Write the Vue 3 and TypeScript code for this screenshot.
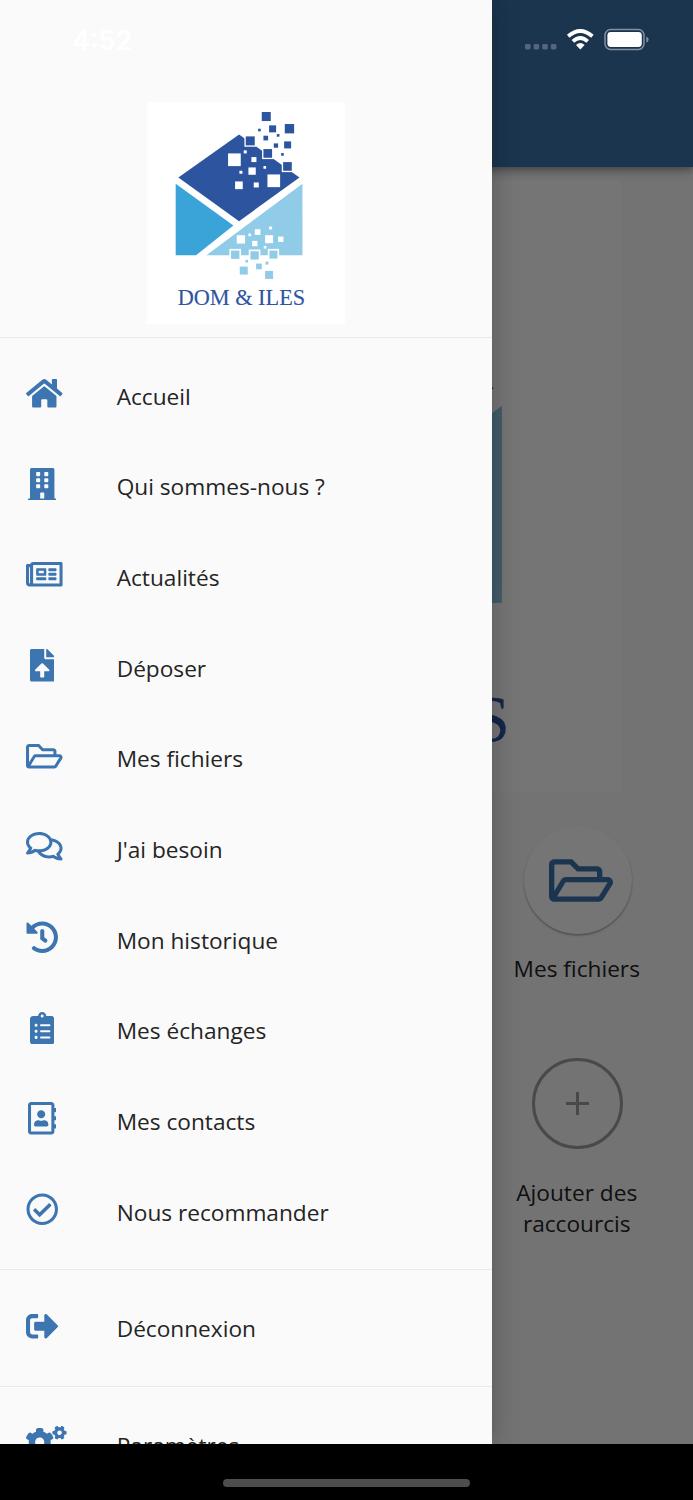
<script setup lang="ts">
interface Icon {
  w: number
  d: string
}
interface Entry {
  label: string
  icon: Icon
}

const folder: Icon = {
  w: 576,
  d: 'M527.9 224H480v-48c0-26.5-21.5-48-48-48H272l-64-64H48C21.5 64 0 85.5 0 112v288c0 26.5 21.5 48 48 48h400c16.5 0 31.9-8.5 40.7-22.6l79.9-128c20-31.9-3-73.4-40.7-73.4zM48 118c0-3.3 2.7-6 6-6h134.1l64 64H426c3.3 0 6 2.7 6 6v42H152c-16.8 0-32.4 8.8-41.1 23.2L48 351.4zm400 282H72l77.2-128H528z',
}

const groups: Entry[][] = [
  [
    {
      label: 'Accueil',
      icon: {
        w: 576,
        d: 'M280.37 148.26L96 300.11V464a16 16 0 0 0 16 16l112.06-.29a16 16 0 0 0 15.92-16V368a16 16 0 0 1 16-16h64a16 16 0 0 1 16 16v95.64a16 16 0 0 0 16 16.05L464 480a16 16 0 0 0 16-16V300L295.67 148.26a12.19 12.19 0 0 0-15.3 0zM571.6 251.47L488 182.56V44.05a12 12 0 0 0-12-12h-56a12 12 0 0 0-12 12v72.61L318.47 43a48 48 0 0 0-61 0L4.34 251.47a12 12 0 0 0-1.6 16.9l25.5 31A12 12 0 0 0 45.15 301l235.22-193.74a12.19 12.19 0 0 1 15.3 0L530.9 301a12 12 0 0 0 16.9-1.6l25.5-31a12 12 0 0 0-1.7-16.93z',
      },
    },
    {
      label: 'Qui sommes-nous ?',
      icon: {
        w: 448,
        d: 'M436 480h-20V24c0-13.255-10.745-24-24-24H56C42.745 0 32 10.745 32 24v456H12c-6.627 0-12 5.373-12 12v20h448v-20c0-6.627-5.373-12-12-12zM128 76c0-6.627 5.373-12 12-12h40c6.627 0 12 5.373 12 12v40c0 6.627-5.373 12-12 12h-40c-6.627 0-12-5.373-12-12V76zm0 96c0-6.627 5.373-12 12-12h40c6.627 0 12 5.373 12 12v40c0 6.627-5.373 12-12 12h-40c-6.627 0-12-5.373-12-12v-40zm52 148h-40c-6.627 0-12-5.373-12-12v-40c0-6.627 5.373-12 12-12h40c6.627 0 12 5.373 12 12v40c0 6.627-5.373 12-12 12zm76 160h-64v-84c0-6.627 5.373-12 12-12h40c6.627 0 12 5.373 12 12v84zm64-172c0 6.627-5.373 12-12 12h-40c-6.627 0-12-5.373-12-12v-40c0-6.627 5.373-12 12-12h40c6.627 0 12 5.373 12 12v40zm0-96c0 6.627-5.373 12-12 12h-40c-6.627 0-12-5.373-12-12v-40c0-6.627 5.373-12 12-12h40c6.627 0 12 5.373 12 12v40zm0-96c0 6.627-5.373 12-12 12h-40c-6.627 0-12-5.373-12-12V76c0-6.627 5.373-12 12-12h40c6.627 0 12 5.373 12 12v40z',
      },
    },
    {
      label: 'Actualités',
      icon: {
        w: 576,
        d: 'M552 64H112c-20.858 0-38.643 13.377-45.248 32H24c-13.255 0-24 10.745-24 24v272c0 30.928 25.072 56 56 56h496c13.255 0 24-10.745 24-24V88c0-13.255-10.745-24-24-24zM48 392V144h16v248c0 4.411-3.589 8-8 8s-8-3.589-8-8zm480 8H111.422c.374-2.614.578-5.283.578-8V112h416v288zM172 280h136c6.627 0 12-5.373 12-12v-96c0-6.627-5.373-12-12-12H172c-6.627 0-12 5.373-12 12v96c0 6.627 5.373 12 12 12zm28-80h80v40h-80v-40zm-40 140v-24c0-6.627 5.373-12 12-12h136c6.627 0 12 5.373 12 12v24c0 6.627-5.373 12-12 12H172c-6.627 0-12-5.373-12-12zm192 0v-24c0-6.627 5.373-12 12-12h104c6.627 0 12 5.373 12 12v24c0 6.627-5.373 12-12 12H364c-6.627 0-12-5.373-12-12zm0-144v-24c0-6.627 5.373-12 12-12h104c6.627 0 12 5.373 12 12v24c0 6.627-5.373 12-12 12H364c-6.627 0-12-5.373-12-12zm0 72v-24c0-6.627 5.373-12 12-12h104c6.627 0 12 5.373 12 12v24c0 6.627-5.373 12-12 12H364c-6.627 0-12-5.373-12-12z',
      },
    },
    {
      label: 'Déposer',
      icon: {
        w: 384,
        d: 'M224 136V0H24C10.7 0 0 10.7 0 24v464c0 13.3 10.7 24 24 24h336c13.3 0 24-10.7 24-24V160H248c-13.2 0-24-10.8-24-24zm65.18 216.01H224v80c0 8.84-7.16 16-16 16h-32c-8.84 0-16-7.16-16-16v-80H94.82c-14.28 0-21.41-17.29-11.27-27.36l96.42-95.7c6.65-6.61 17.39-6.61 24.04 0l96.42 95.7c10.15 10.07 3.03 27.36-11.25 27.36zM377 105L279.1 7c-4.5-4.5-10.6-7-17-7H256v128h128v-6.1c0-6.3-2.5-12.4-7-16.9z',
      },
    },
    { label: 'Mes fichiers', icon: folder },
    {
      label: "J'ai besoin",
      icon: {
        w: 576,
        d: 'M532 386.2c27.5-27.1 44-61.1 44-98.2 0-80-76.5-146.1-176.2-157.9C368.3 72.5 294.3 32 208 32 93.1 32 0 103.6 0 192c0 37 16.5 71 44 98.2-15.3 30.7-37.3 54.5-37.7 54.9-6.3 6.7-8.1 16.5-4.4 25 3.6 8.5 12 14 21.2 14 53.5 0 96.7-20.2 125.2-38.8 9.2 2.1 18.7 3.7 28.4 4.9C208.1 407.6 281.8 448 368 448c20.8 0 40.8-2.4 59.8-6.8C456.3 459.7 499.4 480 553 480c9.2 0 17.5-5.5 21.2-14 3.6-8.5 1.9-18.3-4.4-25-.4-.3-22.5-24.1-37.8-54.8zm-392.8-92.3L122.1 305c-14.1 9.1-28.5 16.3-43.1 21.4 2.7-4.7 5.4-9.7 8-14.8l15.5-31.1L77.7 256C64.2 242.6 48 220.7 48 192c0-60.7 73.3-112 160-112s160 51.3 160 112-73.3 112-160 112c-16.5 0-33-1.9-49-5.6l-19.8-4.5zM498.3 352l-24.7 24.4 15.5 31.1c2.6 5.1 5.3 10.1 8 14.8-14.6-5.1-29-12.3-43.1-21.4l-17.1-11.1-19.9 4.6c-16 3.7-32.5 5.6-49 5.6-54 0-102.2-20.1-131.3-49.7C338 339.5 416 272.9 416 192c0-3.4-.4-6.7-.7-10C479.7 196.5 528 238.8 528 288c0 28.7-16.2 50.6-29.7 64z',
      },
    },
    {
      label: 'Mon historique',
      icon: {
        w: 512,
        d: 'M504 255.531c.253 136.64-111.18 248.372-247.82 248.468-59.015.042-113.223-20.53-155.822-54.911-11.077-8.94-11.905-25.541-1.839-35.607l11.267-11.267c8.609-8.609 22.353-9.551 31.891-1.984C173.062 425.135 212.781 440 256 440c101.705 0 184-82.311 184-184 0-101.705-82.311-184-184-184-48.814 0-93.149 18.969-126.068 49.932l50.754 50.754c10.08 10.08 2.941 27.314-11.313 27.314H24c-8.837 0-16-7.163-16-16V38.627c0-14.254 17.234-21.393 27.314-11.314l49.372 49.372C129.209 34.136 189.552 8 256 8c136.81 0 247.747 110.78 248 247.531zm-180.912 78.784l9.823-12.63c8.138-10.463 6.253-25.542-4.21-33.679L288 256.349V152c0-13.255-10.745-24-24-24h-16c-13.255 0-24 10.745-24 24v135.651l65.409 50.874c10.463 8.137 25.541 6.253 33.679-4.21z',
      },
    },
    {
      label: 'Mes échanges',
      icon: {
        w: 384,
        d: 'M336 64h-80c0-35.3-28.7-64-64-64s-64 28.7-64 64H48C21.5 64 0 85.5 0 112v352c0 26.5 21.5 48 48 48h288c26.5 0 48-21.5 48-48V112c0-26.5-21.5-48-48-48zM96 424c-13.3 0-24-10.7-24-24s10.7-24 24-24 24 10.7 24 24-10.7 24-24 24zm0-96c-13.3 0-24-10.7-24-24s10.7-24 24-24 24 10.7 24 24-10.7 24-24 24zm0-96c-13.3 0-24-10.7-24-24s10.7-24 24-24 24 10.7 24 24-10.7 24-24 24zm96-192c13.3 0 24 10.7 24 24s-10.7 24-24 24-24-10.7-24-24 10.7-24 24-24zm128 368c0 4.4-3.6 8-8 8H168c-4.4 0-8-3.6-8-8v-16c0-4.4 3.6-8 8-8h144c4.4 0 8 3.6 8 8v16zm0-96c0 4.4-3.6 8-8 8H168c-4.4 0-8-3.6-8-8v-16c0-4.4 3.6-8 8-8h144c4.4 0 8 3.6 8 8v16zm0-96c0 4.4-3.6 8-8 8H168c-4.4 0-8-3.6-8-8v-16c0-4.4 3.6-8 8-8h144c4.4 0 8 3.6 8 8v16z',
      },
    },
    {
      label: 'Mes contacts',
      icon: {
        w: 448,
        d: 'M436 160c6.6 0 12-5.4 12-12v-40c0-6.6-5.4-12-12-12h-20V48c0-26.5-21.5-48-48-48H48C21.5 0 0 21.5 0 48v416c0 26.5 21.5 48 48 48h320c26.5 0 48-21.5 48-48v-48h20c6.6 0 12-5.4 12-12v-40c0-6.6-5.4-12-12-12h-20v-64h20c6.6 0 12-5.4 12-12v-40c0-6.6-5.4-12-12-12h-20v-64h20zm-68 304H48V48h320v416zM208 256c35.3 0 64-28.7 64-64s-28.7-64-64-64-64 28.7-64 64 28.7 64 64 64zm-89.6 128h179.2c12.4 0 22.4-8.6 22.4-19.2v-19.2c0-31.8-30.1-57.6-67.2-57.6-10.8 0-18.7 8-44.8 8-26.9 0-33.4-8-44.8-8-37.1 0-67.2 25.8-67.2 57.6v19.2c0 10.6 10 19.2 22.4 19.2z',
      },
    },
    {
      label: 'Nous recommander',
      icon: {
        w: 512,
        d: 'M256 8C119.033 8 8 119.033 8 256s111.033 248 248 248 248-111.033 248-248S392.967 8 256 8zm0 48c110.532 0 200 89.451 200 200 0 110.532-89.451 200-200 200-110.532 0-200-89.451-200-200 0-110.532 89.451-200 200-200m140.204 130.267l-22.536-22.718c-4.667-4.705-12.265-4.736-16.97-.068L215.346 303.697l-59.792-60.277c-4.667-4.705-12.265-4.736-16.97-.069l-22.719 22.536c-4.705 4.667-4.736 12.265-.068 16.971l90.781 91.516c4.667 4.705 12.265 4.736 16.97.068l172.589-171.204c4.704-4.668 4.734-12.266.067-16.971z',
      },
    },
  ],
  [
    {
      label: 'Déconnexion',
      icon: {
        w: 512,
        d: 'M497 273L329 441c-15 15-41 4.5-41-17v-96H152c-13.3 0-24-10.7-24-24v-96c0-13.3 10.7-24 24-24h136V88c0-21.4 25.9-32 41-17l168 168c9.3 9.4 9.3 24.6 0 34zM192 436v-40c0-6.6-5.4-12-12-12H96c-17.7 0-32-14.3-32-32V160c0-17.7 14.3-32 32-32h84c6.6 0 12-5.4 12-12V76c0-6.6-5.4-12-12-12H96c-53 0-96 43-96 96v192c0 53 43 96 96 96h84c6.6 0 12-5.4 12-12z',
      },
    },
  ],
  [
    {
      label: 'Paramètres',
      icon: {
        w: 640,
        d: 'M512.1 191l-8.2 14.3c-3 5.3-9.4 7.5-15.1 5.4-11.8-4.4-22.6-10.7-32.1-18.6-4.6-3.8-5.8-10.5-2.8-15.7l8.2-14.3c-6.9-8-12.3-17.3-15.9-27.4h-16.5c-6 0-11.2-4.3-12.2-10.3-2-12-2.1-24.6 0-37.1 1-6 6.2-10.4 12.2-10.4h16.5c3.6-10.1 9-19.4 15.9-27.4l-8.2-14.3c-3-5.2-1.9-11.9 2.8-15.7 9.5-7.9 20.4-14.2 32.1-18.6 5.7-2.1 12.1.1 15.1 5.4l8.2 14.3c10.5-1.9 21.2-1.9 31.7 0L552 6.3c3-5.3 9.4-7.5 15.1-5.4 11.8 4.4 22.6 10.7 32.1 18.6 4.6 3.8 5.8 10.5 2.8 15.7l-8.2 14.3c6.9 8 12.3 17.3 15.9 27.4h16.5c6 0 11.2 4.3 12.2 10.3 2 12 2.1 24.6 0 37.1-1 6-6.2 10.4-12.2 10.4h-16.5c-3.6 10.1-9 19.4-15.9 27.4l8.2 14.3c3 5.2 1.9 11.9-2.8 15.7-9.5 7.9-20.4 14.2-32.1 18.6-5.7 2.1-12.1-.1-15.1-5.4l-8.2-14.3c-10.4 1.9-21.2 1.9-31.7 0zm-10.5-58.8c38.5 29.6 82.4-14.3 52.8-52.8-38.5-29.7-82.4 14.3-52.8 52.8zM386.3 286.1l33.7 16.8c10.1 5.8 14.5 18.1 10.5 29.1-8.9 24.2-26.4 46.4-42.6 65.8-7.4 8.9-20.2 11.1-30.3 5.3l-29.1-16.8c-16 13.7-34.6 24.6-54.9 31.7v33.6c0 11.6-8.3 21.6-19.7 23.6-24.6 4.2-50.4 4.4-75.9 0-11.5-2-20-11.9-20-23.6V418c-20.3-7.2-38.9-18-54.9-31.7L74 403c-10 5.8-22.9 3.6-30.3-5.3-16.2-19.4-33.3-41.6-42.2-65.7-4-10.9.4-23.2 10.5-29.1l33.3-16.8c-3.9-20.9-3.9-42.4 0-63.4L12 205.8c-10.1-5.8-14.6-18.1-10.5-29 8.9-24.2 26-46.4 42.2-65.8 7.4-8.9 20.2-11.1 30.3-5.3l29.1 16.8c16-13.7 34.6-24.6 54.9-31.7V57.1c0-11.5 8.2-21.5 19.6-23.5 24.6-4.2 50.5-4.4 76-.1 11.5 2 20 11.9 20 23.6v33.6c20.3 7.2 38.9 18 54.9 31.7l29.1-16.8c10-5.8 22.9-3.6 30.3 5.3 16.2 19.4 33.2 41.6 42.1 65.8 4 10.9.1 23.2-10 29.1l-33.7 16.8c3.9 21 3.9 42.5 0 63.5zm-117.6 21.1c59.2-77-28.7-164.9-105.7-105.7-59.2 77 28.7 164.9 105.7 105.7z',
      },
    },
  ],
]

// Logo pixels as [x, y, size]
type Px = [number, number, number]
const darkPx: Px[] = [
  [365, 51, 27], [387, 91, 21], [434, 87, 28], [354, 101, 8], [410, 117, 8],
  [370, 122, 14], [401, 145, 13], [432, 139, 21], [423, 174, 8],
]
const darkEdgePx: Px[] = [[317, 124, 27], [370, 162, 26], [429, 201, 26]]
const whitePx: Px[] = [
  [264, 175, 38], [311, 166, 9], [334, 186, 15], [325, 217, 22], [298, 227, 9],
  [370, 213, 8], [285, 259, 23], [341, 262, 15], [382, 238, 38],
  [290, 420, 25], [325, 415, 8], [344, 402, 17], [387, 394, 9], [336, 437, 16],
  [375, 420, 24], [414, 424, 16], [371, 452, 8],
]
const lightEdgePx: Px[] = [[273, 466, 25], [331, 468, 25], [388, 466, 24]]
const lightPx: Px[] = [
  [316, 494, 8], [376, 499, 9], [299, 514, 24], [348, 505, 17], [375, 527, 24],
]
</script>

<template>
  <div class="screen">
    <svg class="defs" width="0" height="0" aria-hidden="true">
      <symbol id="brand" viewBox="21 21 595 665" preserveAspectRatio="none">
        <rect x="21" y="21" width="595" height="665" fill="#fff" />
        <path d="M297 118L478 247L297 378L115 247Z" fill="#2d559f" />
        <path d="M107 266L280 391L168 480H107Z" fill="#3aa4d8" />
        <path d="M487 266V480H199Z" fill="#90cbe7" />
        <rect v-for="(p, i) in darkEdgePx" :key="'de' + i" :x="p[0] - 2" :y="p[1] - 2" :width="p[2] + 4" :height="p[2] + 4" fill="#2d559f" stroke="#fff" stroke-width="4" />
        <rect v-for="(p, i) in darkPx" :key="'d' + i" :x="p[0]" :y="p[1]" :width="p[2]" :height="p[2]" fill="#2d559f" />
        <rect v-for="(p, i) in whitePx" :key="'w' + i" :x="p[0]" :y="p[1]" :width="p[2]" :height="p[2]" fill="#fff" />
        <rect v-for="(p, i) in lightEdgePx" :key="'le' + i" :x="p[0] - 2.5" :y="p[1] - 2.5" :width="p[2] + 5" :height="p[2] + 5" fill="#90cbe7" stroke="#fff" stroke-width="5" />
        <rect v-for="(p, i) in lightPx" :key="'l' + i" :x="p[0]" :y="p[1]" :width="p[2]" :height="p[2]" fill="#90cbe7" />
        <text x="113" y="630" font-family="'Liberation Serif', serif" font-size="72" fill="#2d559f" stroke="#2d559f" stroke-width="0.4" textLength="382" lengthAdjust="spacingAndGlyphs">DOM &amp; ILES</text>
      </symbol>
    </svg>

    <main class="home">
      <header class="appbar"></header>
      <svg class="hero"><use href="#brand" /></svg>
      <div class="shortcuts">
        <div class="shortcut">
          <span class="disc">
            <svg class="disc-icon" viewBox="0 0 576 512"><path :d="folder.d" /></svg>
          </span>
          <span class="caption">Mes fichiers</span>
        </div>
        <div class="shortcut add">
          <span class="ring">
            <svg class="plus" viewBox="0 0 23 23"><path d="M11.5 0V23M0 11.5H23" /></svg>
          </span>
          <span class="caption">Ajouter des raccourcis</span>
        </div>
      </div>
    </main>

    <div class="scrim"></div>

    <nav class="drawer">
      <div class="drawer-head">
        <svg class="logo"><use href="#brand" /></svg>
      </div>
      <template v-for="(group, g) in groups" :key="g">
        <div class="divider"></div>
        <a v-for="item in group" :key="item.label" class="row">
          <span class="slot" :class="{ wide: item.icon.w > 512 }">
            <svg class="icon" :viewBox="`0 0 ${item.icon.w} 512`" :style="{ width: (item.icon.w * 32.5) / 512 + 'px' }">
              <path :d="item.icon.d" />
            </svg>
          </span>
          <span class="label">{{ item.label }}</span>
        </a>
      </template>
    </nav>

    <div class="status">
      <span class="time">4:52</span>
      <svg class="indicators" viewBox="0 0 126 24">
        <g fill="#53687c">
          <rect x="1" y="16" width="5.6" height="5.4" rx="1.4" />
          <rect x="9.6" y="16" width="5.6" height="5.4" rx="1.4" />
          <rect x="18.2" y="16" width="5.6" height="5.4" rx="1.4" />
          <rect x="26.8" y="16" width="5.6" height="5.4" rx="1.4" />
        </g>
        <g fill="none" stroke="#fff" stroke-width="3.8">
          <path d="M44.2 8.2Q56.3 -2.2 68.4 8.2" />
          <path d="M48.9 13.3Q56.3 6.7 63.7 13.3" />
        </g>
        <path d="M52 16.9Q56.3 13.3 60.6 16.9L56.3 21.4Z" fill="#fff" />
        <rect x="81" y="1.6" width="39" height="19.8" rx="5.6" fill="none" stroke="#8190a0" stroke-width="1.5" />
        <rect x="83.4" y="4" width="34.4" height="15" rx="3.4" fill="#fff" />
        <path d="M122.3 8.4Q124.6 9.2 124.6 11.5T122.3 14.8Z" fill="#8190a0" />
      </svg>
    </div>

    <footer class="bottom"><span class="handle"></span></footer>
  </div>
</template>

<style>
body {
  margin: 0;
}
</style>

<style scoped>
.screen {
  position: relative;
  width: 693px;
  height: 1500px;
  overflow: hidden;
  background: #fafafa;
  font-family: 'Open Sans', sans-serif;
}
.defs {
  position: absolute;
}
.home {
  display: flex;
  flex-direction: column;
  align-items: center;
  height: 1444px;
  background: #fafafa;
}
.appbar {
  width: 100%;
  height: 167px;
  flex: none;
  background: #3c75ad;
  box-shadow: 0 3px 7px rgba(0, 0, 0, 0.3), 0 5px 12px rgba(0, 0, 0, 0.12);
}
.hero {
  width: 549px;
  height: 613px;
  margin-top: 13px;
  flex: none;
}
.shortcuts {
  display: grid;
  grid-template-columns: repeat(3, 1fr);
  width: 100%;
  padding-top: 33px;
}
.shortcut {
  grid-column: 3;
  display: flex;
  flex-direction: column;
  align-items: center;
}
.disc {
  display: flex;
  align-items: center;
  justify-content: center;
  width: 108px;
  height: 108px;
  border-radius: 50%;
  background: #fefefe;
  box-shadow: 0 1.5px 2px rgba(0, 0, 0, 0.32);
}
.disc-icon {
  width: 64px;
  height: 57px;
  margin-left: 7px;
  fill: #3c75b0;
}
.caption {
  width: 150px;
  margin-top: 20px;
  padding-right: 1.5px;
  color: #242424;
  font-size: 22.67px;
  line-height: 30.9px;
  text-align: center;
}
.add {
  margin-top: 73px;
}
.add .caption {
  margin-top: 29px;
}
.ring {
  display: flex;
  align-items: center;
  justify-content: center;
  box-sizing: border-box;
  width: 91px;
  height: 91px;
  border: 3px solid #a0a0a0;
  border-radius: 50%;
}
.plus {
  width: 23px;
  height: 23px;
  fill: none;
  stroke: #a0a0a0;
  stroke-width: 3;
}
.scrim {
  position: absolute;
  inset: 0 0 56px 0;
  background: rgba(0, 0, 0, 0.54);
}
.drawer {
  position: absolute;
  top: 0;
  left: 0;
  width: 492.2px;
  height: 1444px;
  overflow: hidden;
  background: #fafafa;
  box-shadow: 0 0 24px rgba(0, 0, 0, 0.26);
}
.drawer-head {
  display: flex;
  justify-content: center;
  height: 222px;
  padding: 102px 0 0;
}
.logo {
  width: 198.5px;
  height: 222px;
}
.divider {
  display: flex;
  align-items: center;
  height: 26px;
}
.divider::before {
  content: '';
  width: 100%;
  height: 1px;
  background: #e9e9e9;
}
.row {
  display: flex;
  align-items: center;
  height: 90.67px;
  padding-left: 26px;
}
.slot {
  display: flex;
  justify-content: center;
  width: 32.5px;
  height: 32.5px;
  margin: 0 58.2px 4px 0;
}
.slot.wide {
  justify-content: flex-start;
}
.icon {
  flex: none;
  height: 32.5px;
  fill: #3c75b0;
}
.label {
  padding-top: 1.6px;
  color: #242424;
  font-size: 22.67px;
  line-height: 31px;
  white-space: nowrap;
}
.status {
  position: absolute;
  top: 0;
  left: 0;
  display: flex;
  justify-content: space-between;
  align-items: center;
  box-sizing: border-box;
  width: 693px;
  height: 80px;
  padding: 0 43px 0 72px;
}
.time {
  color: #fff;
  font: 600 27px 'Inter', sans-serif;
}
.indicators {
  width: 126px;
  height: 24px;
}
.bottom {
  position: absolute;
  left: 0;
  right: 0;
  bottom: 0;
  display: flex;
  justify-content: center;
  align-items: center;
  height: 56px;
  box-sizing: border-box;
  padding-top: 21px;
  background: #000;
}
.handle {
  width: 247px;
  height: 8px;
  border-radius: 4px;
  background: #4d4d4d;
}
</style>
